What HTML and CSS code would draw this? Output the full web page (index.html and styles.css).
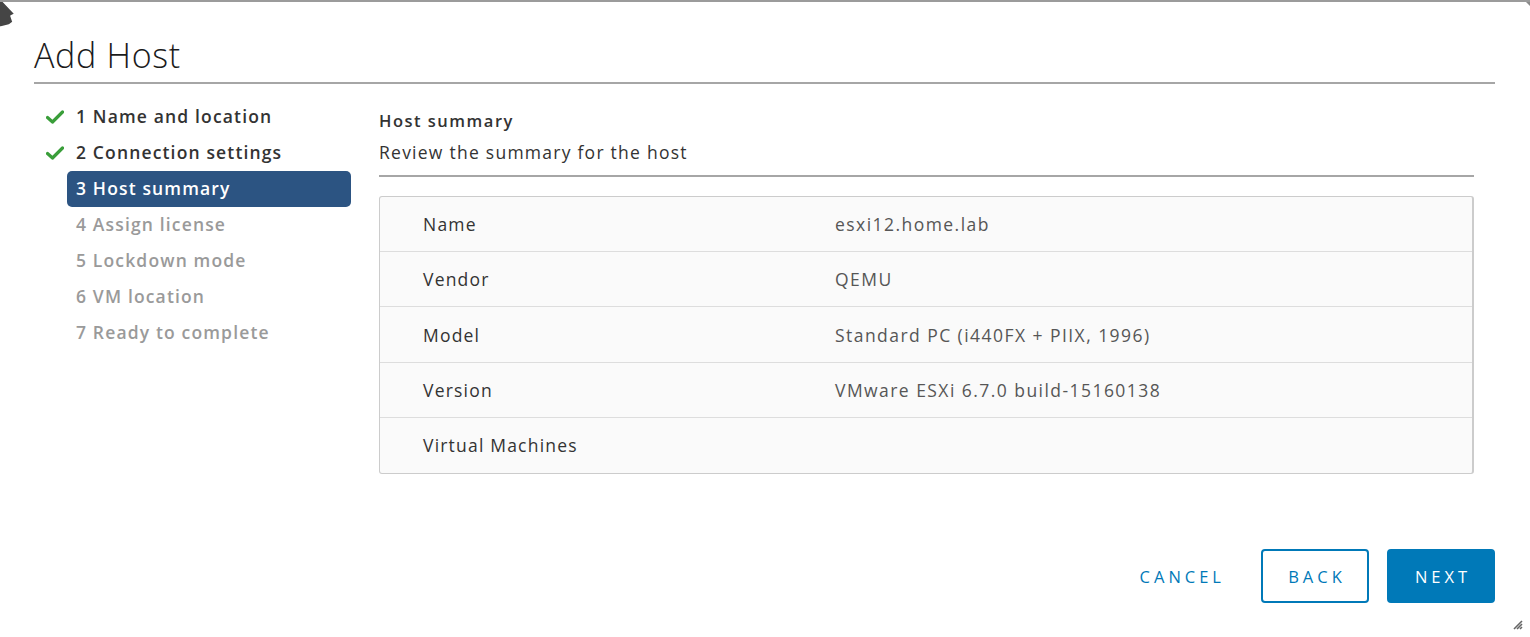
FILE: index.html
```html
<!DOCTYPE html>
<html lang="en">
<head>
<meta charset="utf-8">
<title>Add Host</title>
<link rel="stylesheet" href="styles.css">
</head>
<body>
<div class="dialog">
  <header class="dialog-header">
    <h1 class="dialog-title">Add Host</h1>
  </header>
  <div class="dialog-body">
    <nav class="steps">
      <div class="step done">
        <span class="step-icon"><svg width="18" height="14" viewBox="0 0 18 14"><path d="M1.5 7.5 L6.5 12 L16.5 2" fill="none" stroke="#3a9e3a" stroke-width="3.2" stroke-linecap="round" stroke-linejoin="round"/></svg></span>
        <span class="step-label">1 Name and location</span>
      </div>
      <div class="step done">
        <span class="step-icon"><svg width="18" height="14" viewBox="0 0 18 14"><path d="M1.5 7.5 L6.5 12 L16.5 2" fill="none" stroke="#3a9e3a" stroke-width="3.2" stroke-linecap="round" stroke-linejoin="round"/></svg></span>
        <span class="step-label">2 Connection settings</span>
      </div>
      <div class="step active">
        <span class="step-icon"></span>
        <span class="step-label">3 Host summary</span>
      </div>
      <div class="step disabled">
        <span class="step-icon"></span>
        <span class="step-label">4 Assign license</span>
      </div>
      <div class="step disabled">
        <span class="step-icon"></span>
        <span class="step-label">5 Lockdown mode</span>
      </div>
      <div class="step disabled">
        <span class="step-icon"></span>
        <span class="step-label">6 VM location</span>
      </div>
      <div class="step disabled">
        <span class="step-icon"></span>
        <span class="step-label">7 Ready to complete</span>
      </div>
    </nav>
    <main class="content">
      <div class="content-head">
        <h2 class="content-title">Host summary</h2>
        <p class="content-desc">Review the summary for the host</p>
      </div>
      <div class="summary">
        <div class="row"><span class="label">Name</span><span class="value">esxi12.home.lab</span></div>
        <div class="row"><span class="label">Vendor</span><span class="value">QEMU</span></div>
        <div class="row"><span class="label">Model</span><span class="value">Standard PC (i440FX + PIIX, 1996)</span></div>
        <div class="row"><span class="label">Version</span><span class="value">VMware ESXi 6.7.0 build-15160138</span></div>
        <div class="row"><span class="label">Virtual Machines</span><span class="value"></span></div>
      </div>
    </main>
  </div>
  <footer class="dialog-footer">
    <button class="btn btn-link">CANCEL</button>
    <button class="btn btn-outline">BACK</button>
    <button class="btn btn-primary">NEXT</button>
  </footer>
</div>
<svg class="cursor" width="20" height="30" viewBox="0 0 20 30"><path d="M-2 -4 L15 14 L11 16 L13 22 L9 25 L1 27 L-2 27 Z" fill="#454545" stroke="#ffffff" stroke-width="1.5" stroke-linejoin="round"/></svg>
<svg class="resize" width="14" height="14" viewBox="0 0 14 14"><path d="M2 12 L10 4 M5 12 L10 7 M8 12 L10 10" stroke="#666" stroke-width="1.6"/></svg>
<span class="corner"></span>
</body>
</html>
```
FILE: styles.css
```css
html, body {
  margin: 0;
  padding: 0;
  background: #ffffff;
}
body {
  font-family: "Open Sans", "Liberation Sans", sans-serif;
  color: #333333;
  border-top: 2px solid #9b9b9b;
  height: 635px;
  overflow: hidden;
  position: relative;
}
.dialog {
  display: flex;
  flex-direction: column;
  padding: 0 35px 0 34px;
  height: 100%;
  box-sizing: border-box;
}
.dialog-header {
  border-bottom: 2px solid #a6a6a6;
  height: 80px;
  display: flex;
  align-items: flex-end;
}
.dialog-title {
  margin: 0 0 7px 0;
  font-weight: 300;
  font-size: 34px;
  line-height: 40px;
  color: #1b1b1b;
  letter-spacing: 0.7px;
}
.dialog-body {
  display: flex;
  gap: 28px;
  padding-top: 15px;
}
.steps {
  width: 317px;
  display: flex;
  flex-direction: column;
  flex-shrink: 0;
}
.step {
  display: flex;
  align-items: center;
  height: 36px;
}
.step-icon {
  width: 33px;
  flex-shrink: 0;
  display: flex;
  align-items: center;
  padding-left: 12px;
  box-sizing: border-box;
}
.step-label {
  flex: 1;
  height: 36px;
  line-height: 35px;
  padding-left: 9px;
  font-size: 17.5px;
  font-weight: 600;
  letter-spacing: 1.15px;
  border-radius: 5px;
  white-space: nowrap;
}
.step.done .step-label { color: #333333; }
.step.active .step-label {
  background: #2c5482;
  color: #ffffff;
}
.step.disabled .step-label { color: #9a9a9a; }
.content {
  flex: 1;
  margin-right: 21px;
}
.content-head {
  border-bottom: 2px solid #a6a6a6;
  padding-top: 11px;
  padding-bottom: 11px;
}
.content-title {
  margin: 0;
  font-size: 16.5px;
  font-weight: 600;
  line-height: 22px;
  color: #333333;
  letter-spacing: 1.5px;
}
.content-desc {
  margin: 8px 0 0 0;
  font-size: 17.5px;
  line-height: 24px;
  color: #333333;
  letter-spacing: 1.25px;
}
.summary {
  margin-top: 19px;
  background: #fafafa;
  border: 1px solid #cccccc;
  border-right-width: 2px;
  border-radius: 3px;
}
.row {
  display: flex;
  align-items: center;
  height: 54.4px;
  border-top: 1px solid #dddddd;
}
.row:first-child { border-top: none; height: 54px; }
.label {
  width: 412px;
  padding-left: 43px;
  flex-shrink: 0;
  font-size: 17.5px;
  color: #333333;
  letter-spacing: 1.2px;
}
.value {
  font-size: 17.5px;
  color: #565656;
  letter-spacing: 1.45px;
}
.dialog-footer {
  margin-top: auto;
  margin-bottom: 34px;
  display: flex;
  justify-content: flex-end;
  align-items: center;
}
.btn {
  font-family: inherit;
  font-size: 16.5px;
  font-weight: 500;
  letter-spacing: 4px;
  height: 54px;
  border-radius: 4px;
  padding: 0;
  cursor: pointer;
  box-sizing: border-box;
  text-indent: 4px;
}
.btn-link {
  background: transparent;
  border: none;
  color: #0079b8;
  padding: 0 16px;
  margin-right: 20px;
}
.btn-outline {
  background: #ffffff;
  border: 2px solid #0079b8;
  color: #0079b8;
  width: 108px;
  margin-right: 18px;
}
.btn-primary {
  background: #0079b8;
  border: 2px solid #0079b8;
  color: #ffffff;
  width: 108px;
}
.cursor {
  position: absolute;
  left: 0;
  top: -2px;
}
.resize {
  position: absolute;
  right: 4px;
  bottom: 6px;
}
.corner {
  position: absolute;
  right: 0;
  top: -2px;
  width: 0;
  height: 0;
  border-top: 6px solid #8a8a8a;
  border-left: 6px solid transparent;
}
```
